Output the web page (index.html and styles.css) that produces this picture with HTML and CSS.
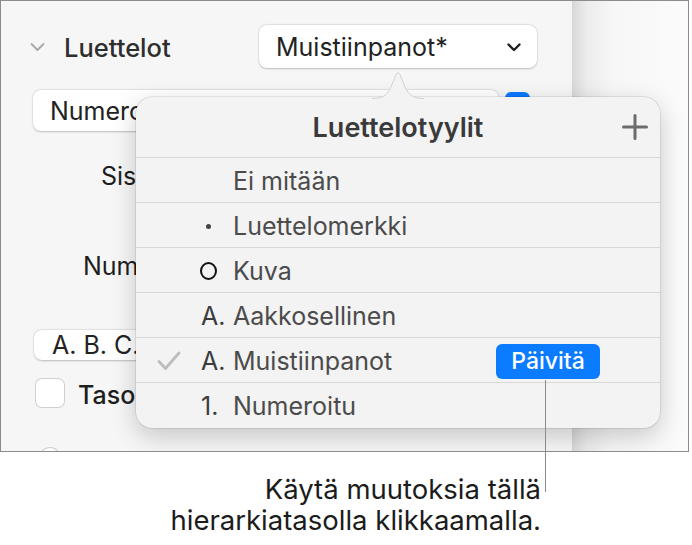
FILE: index.html
```html
<!DOCTYPE html>
<html lang="fi">
<head>
<meta charset="utf-8">
<title>Luettelotyylit</title>
<link rel="stylesheet" href="styles.css">
</head>
<body>
<div class="page">
  <div class="frame">
    <div class="sidebar">
      <div class="row-head">
        <svg class="disclosure" width="15" height="10" viewBox="0 0 15 10"><path d="M1.5 2 L7.5 8 L13.5 2" fill="none" stroke="#a7a7a7" stroke-width="1.8" stroke-linecap="round" stroke-linejoin="round"/></svg>
        <span class="head-title">Luettelot</span>
        <div class="popup popup-style">
          <span>Muistiinpanot*</span>
          <svg class="popup-chev" width="14" height="9" viewBox="0 0 14 9"><path d="M1.5 1.5 L7 7 L12.5 1.5" fill="none" stroke="#1f1f1f" stroke-width="2.4" stroke-linecap="round" stroke-linejoin="round"/></svg>
        </div>
      </div>
      <div class="row-num">
        <div class="popup popup-num"><span>Numerointi</span></div>
        <span class="blue-check"></span>
      </div>
      <div class="label lbl-sis">Sisennys</div>
      <div class="label lbl-num">Numerot</div>
      <div class="popup popup-abc"><span>A. B. C.</span></div>
      <div class="row-check">
        <span class="checkbox"></span>
        <span class="check-label">Tasoitus</span>
      </div>
      <span class="radio"></span>
    </div>
    <div class="canvas"></div>

    <div class="popover">
      <svg class="arrow" width="52" height="29" viewBox="0 0 52 29"><path d="M0 28.5 C11 28.5 15 25 18.5 18 L24 4.5 Q26 1 28 4.5 L33.5 18 C37 25 41 28.5 52 28.5" fill="#f3f3f3" stroke="#d2d2d2" stroke-width="1"/></svg>
      <div class="pop-head">
        <span class="pop-title">Luettelotyylit</span>
        <svg class="plus" width="26" height="26" viewBox="0 0 26 26"><path d="M13 1.5 V24.5 M1.5 13 H24.5" stroke="#6c6c6c" stroke-width="3" stroke-linecap="round"/></svg>
      </div>
      <div class="pop-row">
        <span class="chk"></span><span class="mark"></span><span class="name">Ei mitään</span>
      </div>
      <div class="pop-row">
        <span class="chk"></span><span class="mark"><span class="dot"></span></span><span class="name">Luettelomerkki</span>
      </div>
      <div class="pop-row">
        <span class="chk"></span><span class="mark"><span class="ring"></span></span><span class="name">Kuva</span>
      </div>
      <div class="pop-row">
        <span class="chk"></span><span class="mark">A.</span><span class="name">Aakkosellinen</span>
      </div>
      <div class="pop-row">
        <span class="chk"><svg width="24" height="20" viewBox="0 0 24 20"><path d="M2 10.5 L8.5 17.5 L22 2" fill="none" stroke="#bdbdbd" stroke-width="2.8" stroke-linecap="round" stroke-linejoin="round"/></svg></span>
        <span class="mark">A.</span><span class="name">Muistiinpanot</span>
        <span class="update">Päivitä</span>
      </div>
      <div class="pop-row">
        <span class="chk"></span><span class="mark">1.</span><span class="name">Numeroitu</span>
      </div>
    </div>
  </div>
  <div class="callout-line"></div>
  <p class="caption">Käytä muutoksia tällä<br>hierarkiatasolla klikkaamalla.</p>
</div>
</body>
</html>
```

FILE: styles.css
```css
* { box-sizing: border-box; }

html, body {
  margin: 0;
  padding: 0;
  background: #ffffff;
}

body {
  font-family: Inter, "Noto Sans", "Liberation Sans", sans-serif;
  color: #222;
}

.page {
  position: relative;
  width: 692px;
  height: 545px;
}

.frame {
  position: relative;
  width: 689px;
  height: 452px;
  border: 1px solid #8c8c8c;
  display: flex;
  overflow: hidden;
}

.sidebar {
  width: 572px;
  flex: none;
  background: #f6f6f6;
  border-right: 1px solid #d4d4d4;
  padding: 24px 35px 0 29px;
  display: flex;
  flex-direction: column;
  align-items: flex-start;
}

.canvas {
  flex: 1;
  background: linear-gradient(to right, #d9d9d9 0px, #ececec 14px, #f7f7f7 40px, #fbfbfb 100%);
}

.row-head {
  display: flex;
  align-items: center;
  height: 43px;
  width: 100%;
}

.disclosure { flex: none; margin-right: 19px; margin-top: 1px; }

.head-title {
  font-size: 25.5px;
  font-weight: 500;
  color: #2e2e2e;
  margin-top: 1px;
}

.popup {
  display: flex;
  align-items: center;
  background: #ffffff;
  border-radius: 8px;
  box-shadow: 0 0.5px 2px rgba(0, 0, 0, 0.22), 0 0 0 0.5px rgba(0, 0, 0, 0.06);
  font-size: 25px;
  color: #222;
}

.popup-style {
  margin-left: auto;
  width: 278px;
  height: 43px;
  padding: 0 16px 0 17px;
  justify-content: space-between;
}

.popup-chev { margin-top: 2px; }

.row-num {
  display: flex;
  align-items: flex-start;
  justify-content: space-between;
  width: 100%;
  margin-top: 22px;
}

.popup-num {
  margin-left: 3px;
  width: 466px;
  height: 41px;
  padding-left: 17px;
}

.blue-check {
  width: 25px;
  height: 25px;
  border-radius: 6px;
  background: #0a7aff;
  margin-top: 2px;
  margin-right: 7px;
}

.label {
  font-size: 25px;
  color: #1e1e1e;
  height: 32px;
  line-height: 32px;
}

.lbl-sis { margin: 29px 0 0 71px; }
.lbl-num { margin: 58px 0 0 53px; }

.popup-abc {
  margin: 48px 0 0 4px;
  width: 300px;
  height: 41px;
  padding-left: 18px;
}

.row-check {
  display: flex;
  align-items: center;
  margin: 19px 0 0 6px;
  height: 28px;
}

.checkbox {
  width: 28px;
  height: 28px;
  border-radius: 6px;
  background: #fff;
  box-shadow: 0 0 0 1px #d0d0d0;
  margin-right: 14px;
}

.check-label {
  font-size: 25px;
  font-weight: 500;
  color: #1e1e1e;
  margin-top: 3px;
}

.radio {
  width: 20px;
  height: 20px;
  border-radius: 50%;
  background: #fff;
  box-shadow: 0 0 0 1px #cfcfcf;
  margin: 41px 0 0 10px;
  flex: none;
}

/* popover */
.popover {
  position: absolute;
  left: 135px;
  top: 96px;
  width: 524px;
  height: 331px;
  background: #f3f3f3;
  border-radius: 16px;
  box-shadow: 0 0 0 0.5px rgba(0, 0, 0, 0.16), 0 8px 26px rgba(0, 0, 0, 0.2);
}

.arrow {
  position: absolute;
  left: 236px;
  top: -27.5px;
}

.pop-head {
  position: relative;
  height: 60px;
  display: flex;
  align-items: center;
  justify-content: center;
}

.pop-title {
  font-size: 27px;
  font-weight: 600;
  color: #3a3a3a;
}

.plus {
  position: absolute;
  right: 12px;
  top: 17px;
}

.pop-row {
  display: grid;
  grid-template-columns: 63px 34px 1fr auto;
  align-items: center;
  height: 45px;
  border-top: 1px solid #d8d8d8;
  padding: 2px 60px 0 0;
  font-size: 25px;
  color: #4b4b4b;
}

.chk {
  display: flex;
  align-items: center;
  padding-left: 21px;
}

.mark {
  display: flex;
  align-items: center;
  padding-left: 2px;
  color: #3c3c3c;
}

.dot {
  width: 5px;
  height: 5px;
  border-radius: 50%;
  background: #444;
  margin-left: 5px;
}

.ring {
  width: 17px;
  height: 18px;
  border-radius: 50%;
  border: 2.6px solid #111;
  margin-left: -1px;
}

.update {
  background: #0b7bff;
  color: #fff;
  font-weight: 500;
  font-size: 23px;
  border-radius: 6px;
  height: 35px;
  width: 104px;
  display: flex;
  align-items: center;
  justify-content: center;
}

.callout-line {
  position: absolute;
  left: 545px;
  top: 380px;
  width: 1px;
  height: 112px;
  background: #8a8a8a;
}

.caption {
  width: 541px;
  margin: 22px 0 0 0;
  text-align: right;
  font-size: 27.5px;
  line-height: 31px;
  color: #1c1c1c;
}
```
